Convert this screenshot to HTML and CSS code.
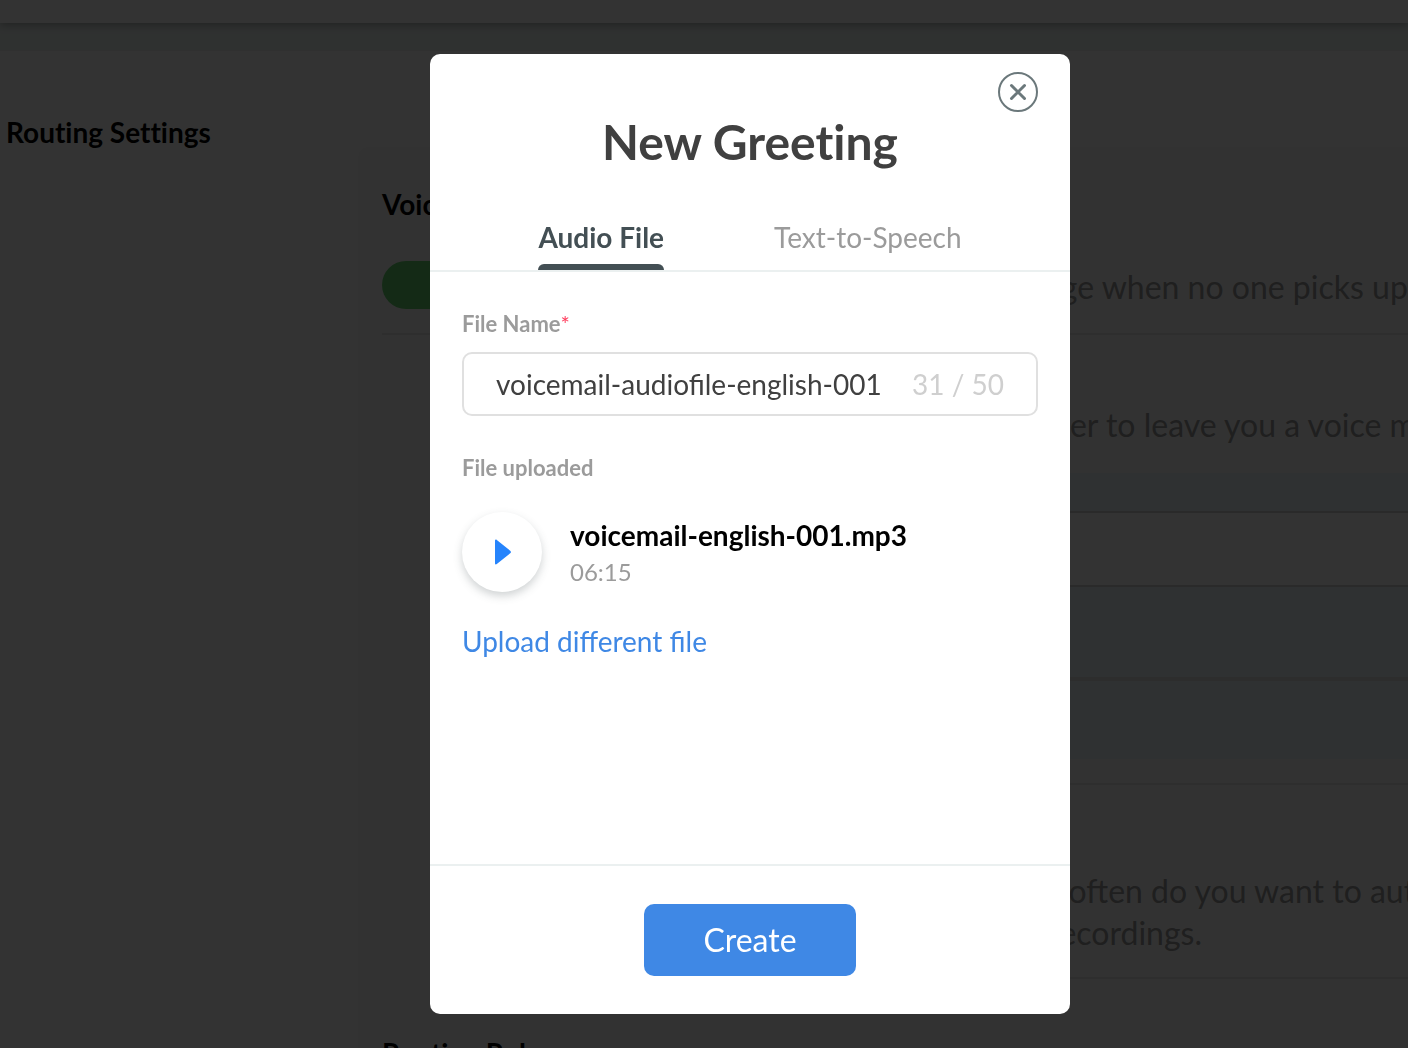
FILE: index.html
```html
<!DOCTYPE html>
<html lang="en">
<head>
<meta charset="utf-8">
<meta name="viewport" content="width=device-width, initial-scale=1">
<title>New Greeting</title>
<link rel="stylesheet" href="styles.css">
</head>
<body>
<div class="page" inert>
  <header class="topbar"></header>
  <div class="band"></div>
  <main class="settings">
    <h2 class="settings-title">Routing Settings</h2>
    <div class="column">
      <section class="card">
        <h3 class="card-title">Voicemail</h3>
        <div class="row row-toggle">
          <input class="switch" type="checkbox" checked aria-label="Voicemail">
          <p class="hint">message when no one picks up the call</p>
        </div>
        <div class="row row-inset row-greeting">
          <p class="hint">Greeting for the caller to leave you a voice message</p>
          <div class="panel">
            <div class="panel-head"></div>
            <div class="panel-field"></div>
            <div class="panel-item"></div>
            <div class="panel-foot"></div>
          </div>
        </div>
        <div class="row row-inset row-delete">
          <p class="hint">How often do you want to automatically delete<br>the recordings.</p>
        </div>
        <h3 class="card-title card-title-next">Routing Rules</h3>
      </section>
    </div>
  </main>
</div>

<div class="overlay">
  <form class="modal" role="dialog" aria-modal="true" aria-labelledby="modal-title">
    <header class="modal-head">
      <button class="close" type="button" aria-label="Close">
        <svg width="40" height="40" viewBox="0 0 40 40" fill="none" stroke="#6b787b">
          <circle cx="20" cy="20" r="19" stroke-width="2"/>
          <path d="M13.500 13.500L26.500 26.500M26.500 13.500L13.500 26.500" stroke-width="3" stroke-linecap="round"/>
        </svg>
      </button>
      <h1 class="modal-title" id="modal-title">New Greeting</h1>
      <div class="tabs" role="tablist">
        <button class="tab tab-active" type="button" role="tab" aria-selected="true">Audio File</button>
        <button class="tab" type="button" role="tab" aria-selected="false">Text-to-Speech</button>
      </div>
    </header>
    <div class="modal-body">
      <label class="label" for="file-name">File Name<span class="required">*</span></label>
      <div class="field">
        <input class="field-input" id="file-name" type="text" value="voicemail-audiofile-english-001" maxlength="50">
        <span class="count">31 / 50</span>
      </div>
      <h2 class="label">File uploaded</h2>
      <div class="file">
        <button class="play" type="button" aria-label="Play">
          <svg width="20" height="26" viewBox="0 0 20 26" fill="#2684fc">
            <path d="M3 1.600C3 .6 4 .3 4.800 1L18.200 11.700C19.200 12.500 19.200 13.500 18.200 14.300L4.800 25C4 25.700 3 25.400 3 24.400Z"/>
          </svg>
        </button>
        <div class="file-info">
          <div class="file-name">voicemail-english-001.mp3</div>
          <div class="file-time">06:15</div>
        </div>
      </div>
      <a class="link" href="#">Upload different file</a>
    </div>
    <footer class="modal-foot">
      <button class="create" type="submit">Create</button>
    </footer>
  </form>
</div>
</body>
</html>
```

FILE: styles.css
```css
* {
  box-sizing: border-box;
}

body {
  margin: 0;
  height: 100vh;
  overflow: hidden;
  font-family: Lato, "Liberation Sans", sans-serif;
  background: #fff;
  color: #000;
}

h1, h2, h3, p {
  margin: 0;
}

h1, h2, h3 {
  font-variant-ligatures: none;
}

button {
  padding: 0;
  border: 0;
  background: none;
  font-family: inherit;
  cursor: pointer;
}

/* Settings page under the dialog */

.page {
  height: 100vh;
  overflow: hidden;
}

.topbar {
  position: relative;
  height: 23px;
  background: #fff;
  box-shadow: 0 2px 8px rgba(0, 0, 0, 0.3);
}

.band {
  height: 28px;
  background: #ebf2f0;
  border-bottom: 1px solid #f0f0f0;
}

.settings {
  display: grid;
  grid-template-columns: 352px 1fr;
  padding-left: 6px;
}

.settings-title {
  padding-top: 63px;
  font-size: 28px;
  line-height: 36px;
}

.column {
  padding-top: 96px;
  min-width: 0;
}

.card {
  padding: 39px 0 0 24px;
  border-radius: 10px 0 0 0;
  background: #fafafa;
}

.card-title {
  font-size: 28px;
  line-height: 36px;
}

.card-title-next {
  padding-top: 56px;
}

.row {
  border-bottom: 2px solid #e6e6e6;
}

.row-inset {
  margin-left: 60px;
}

.hint {
  font-size: 32px;
  line-height: 42px;
  color: #9b9b9b;
  white-space: nowrap;
}

.row-toggle {
  display: flex;
  align-items: center;
  gap: 508px;
  padding: 39px 0 24px;
}

.row-toggle .hint {
  padding-top: 4px;
}

.switch {
  flex: none;
  width: 84px;
  height: 48px;
  margin: 0;
  appearance: none;
  border-radius: 24px;
  background: #64d26e;
}

.row-greeting {
  padding: 69px 0 24px;
}

.row-greeting .hint {
  padding-left: 349px;
}

.panel {
  margin-top: 27px;
  background: #ebf2fa;
}

.panel-head {
  height: 38px;
}

.panel-field {
  height: 76px;
  border: solid #d2d2d2;
  border-width: 2px 0;
  background: #fff;
}

.panel-item {
  height: 94px;
  border-bottom: 4px solid #e1e1e1;
}

.panel-foot {
  height: 78px;
}

.row-delete {
  padding: 85px 0 23px;
}

.row-delete .hint {
  padding-left: 552px;
}

/* Dialog */

.overlay {
  position: fixed;
  inset: 0;
  display: flex;
  justify-content: center;
  padding: 54px 0 34px 92px;
  overflow: auto;
  background: rgba(0, 0, 0, 0.8);
}

.modal {
  display: flex;
  flex-direction: column;
  width: 640px;
  border-radius: 10px;
  background: #fff;
}

.modal-head {
  display: flex;
  flex-direction: column;
  padding-top: 18px;
  border-bottom: 2px solid #ebf0f0;
}

.close {
  align-self: flex-end;
  width: 40px;
  height: 40px;
  margin-right: 32px;
}

.close svg {
  display: block;
}

.modal-title {
  font-size: 48px;
  line-height: 60px;
  text-align: center;
  color: #404040;
}

.tabs {
  display: flex;
  justify-content: center;
  gap: 110px;
  margin-top: 45px;
}

.tab {
  position: relative;
  padding-bottom: 13px;
  font-size: 28px;
  line-height: 40px;
  color: #9b9b9b;
}

.tab-active {
  font-weight: 700;
  color: #434f54;
}

.tab-active::after {
  content: "";
  position: absolute;
  inset: auto 0 0;
  height: 6px;
  border-radius: 6px 6px 0 0;
  background: #434f54;
}

.modal-body {
  display: flex;
  flex: 1;
  flex-direction: column;
  align-items: flex-start;
  padding: 38px 32px;
}

.label {
  font-size: 22px;
  font-weight: 700;
  line-height: 28px;
  color: #9b9b9b;
}

.required {
  font-weight: 400;
  color: #ff4060;
}

.field {
  display: flex;
  align-items: center;
  align-self: stretch;
  gap: 24px;
  height: 64px;
  margin: 14px 0 38px;
  padding: 0 32px;
  border: 2px solid #e0e0e0;
  border-radius: 10px;
}

.field-input {
  flex: 1;
  min-width: 0;
  padding: 0;
  border: 0;
  outline: 0;
  background: none;
  font-family: inherit;
  font-size: 28px;
  line-height: 40px;
  color: #404040;
}

.count {
  font-size: 28px;
  line-height: 40px;
  color: #cfcfcf;
}

.file {
  display: flex;
  align-items: center;
  gap: 28px;
  margin: 30px 0 29px;
}

.play {
  display: flex;
  align-items: center;
  justify-content: center;
  width: 80px;
  height: 80px;
  border-radius: 50%;
  background: #fff;
  box-shadow: 0 4px 8px rgba(67, 79, 84, 0.25);
}

.file-info {
  padding-top: 4px;
}

.file-name {
  font-size: 28px;
  font-weight: 700;
  line-height: 36px;
}

.file-time {
  font-size: 24px;
  line-height: 38px;
  color: #9b9b9b;
}

.link {
  font-size: 28px;
  line-height: 40px;
  color: #3f88e5;
  text-decoration: none;
}

.modal-foot {
  display: flex;
  justify-content: center;
  padding: 38px;
  border-top: 2px solid #ebf0f0;
}

.create {
  width: 212px;
  height: 72px;
  border-radius: 10px;
  background: #3f88e5;
  font-size: 32px;
  line-height: 40px;
  color: #fff;
}
```
